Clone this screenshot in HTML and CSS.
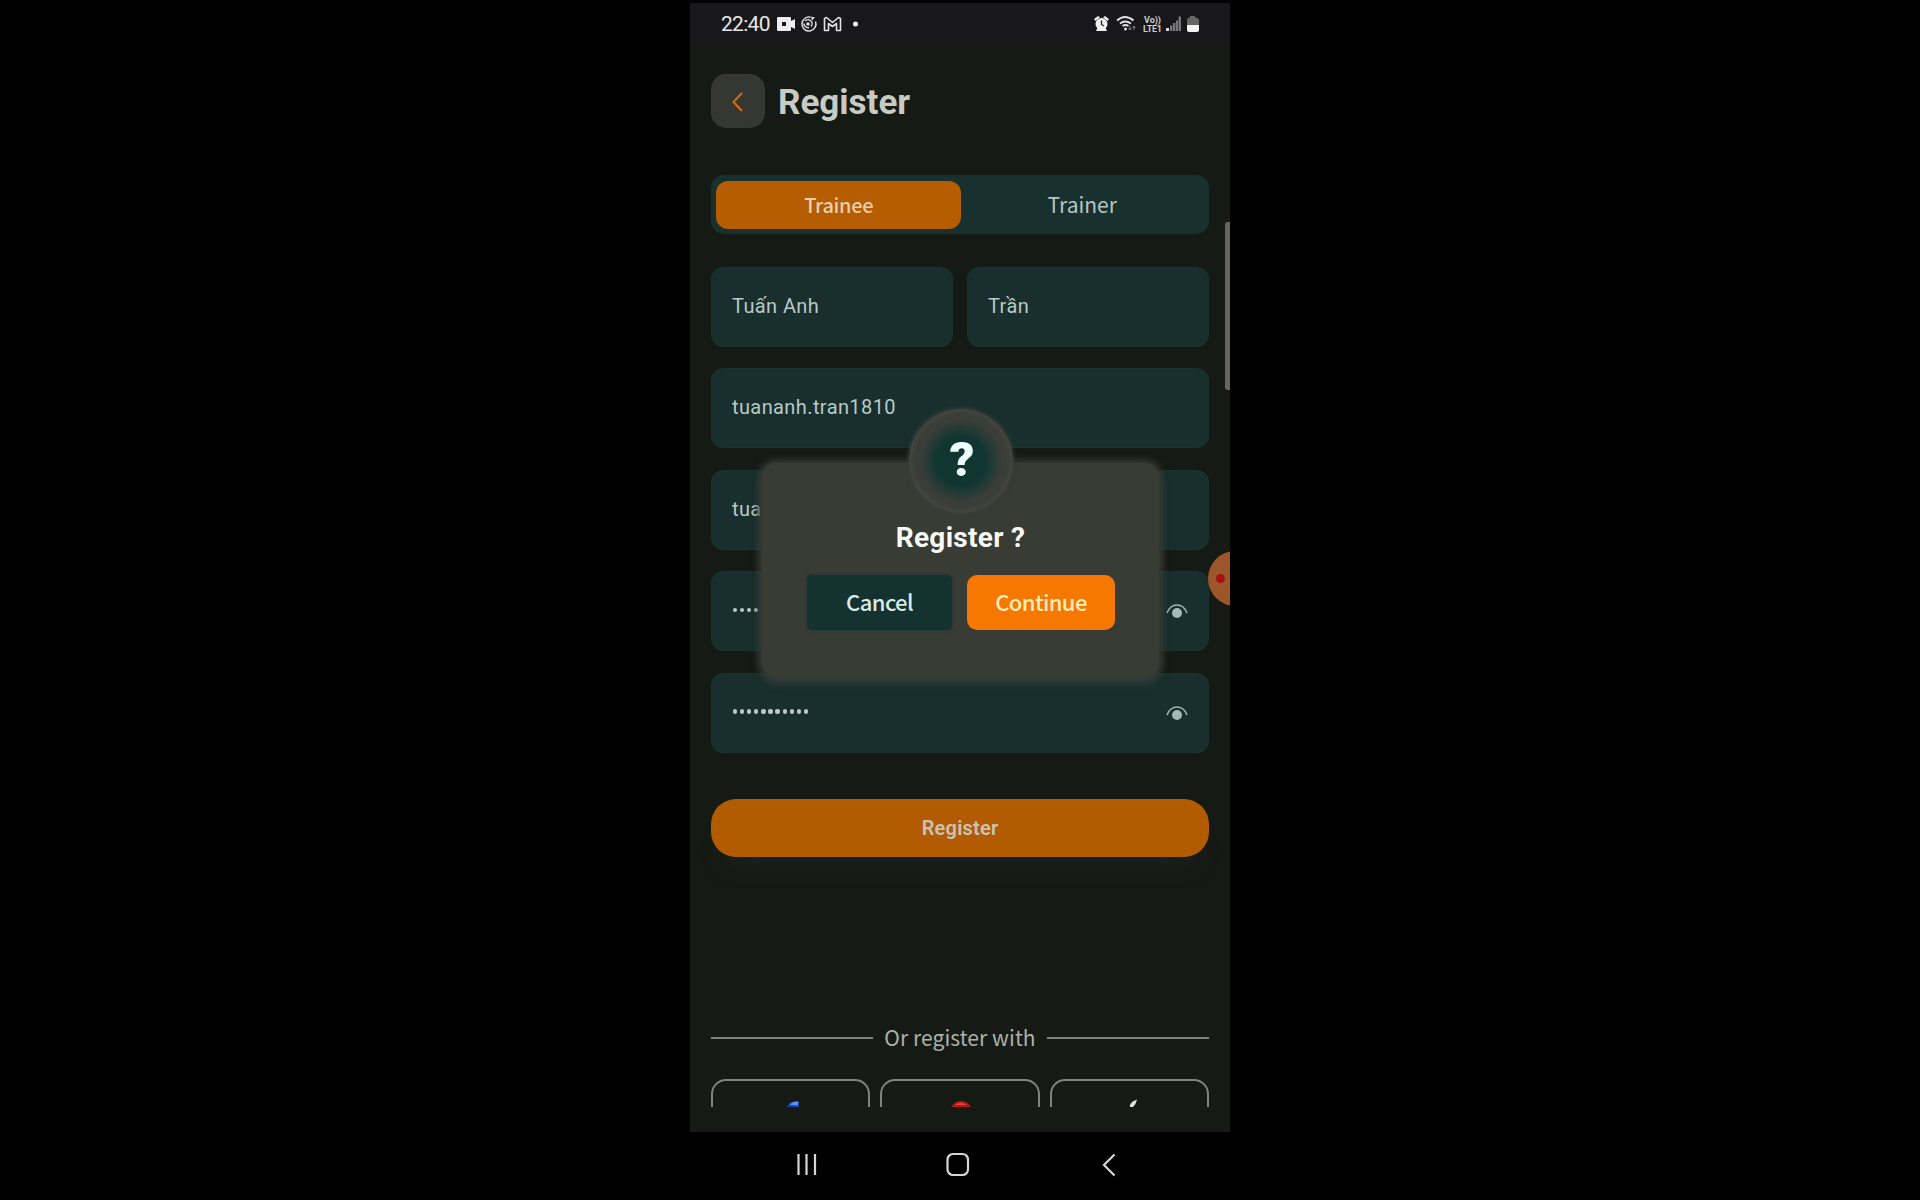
FILE: index.html
```
<!DOCTYPE html>
<html lang="en">
<head>
<meta charset="utf-8">
<title>Register</title>
<link rel="stylesheet" href="styles.css">
</head>
<body>
<div class="phone">
  <header class="status">
    <span class="clock">22:40</span>
    <svg class="status-left" width="90" height="20" viewBox="0 0 90 20">
      <path fill="#eee" fill-rule="evenodd" d="M3 3h12q1 0 1 1v3l4-2v10l-4-2v3q0 1-1 1H3q-1 0-1-1V4q0-1 1-1zM7 8v4h4V8z"/>
      <g fill="none" stroke="#ddd" stroke-width="1.5"><path d="M35.500 3.200A7 7 0 1 0 40.500 7.500"/><path d="M30 7a4 4 0 0 1 6 5.500M29 9.500a4 4 0 0 0 5 4"/></g>
      <circle cx="33" cy="10" r="1.800" fill="#ddd"/><path d="M36 2.500l4 1-3 3z" fill="#ddd"/>
      <path fill="none" stroke="#e2e2e2" stroke-width="1.600" stroke-linejoin="round" d="M49.500 16.500V4.500l2-1 6 5 6-5 2 1v12h-4v-7l-4 3-4-3v7z"/>
      <circle cx="80.500" cy="10" r="2.500" fill="#f2f2f2"/>
    </svg>
    <svg class="status-right" width="110" height="20" viewBox="0 0 110 20">
      <path fill="#eee" d="M1 5l4-3 2 1.200L2.500 7zM16 5l-4-3-2 1.200L14.500 7z"/><circle cx="8.500" cy="10" r="6" fill="#f0f0f0"/><path d="M3 17l2-4h7l2 4z" fill="#f0f0f0"/>
      <path d="M8.500 6.500v4l2.500 1.500" fill="none" stroke="#222" stroke-width="1.300"/>
      <g fill="none" stroke="#e2e2e2" stroke-width="2"><path d="M24 6.500q8-7 16.500 0"/><path d="M27 9.500q5-4 11 0"/><path d="M29.500 12q3-2 6 0"/></g>
      <circle cx="32.500" cy="15" r="1.500" fill="#ddd"/><path d="M37 12v4m-1.500-1.500L37 16l1.500-1.500M41 16v-4m-1.500 1.500L41 12l1.500 1.500" fill="none" stroke="#888" stroke-width="1"/>
      <text class="lte" x="51" y="8.500" textLength="17">Vo))</text><text class="lte" x="50" y="17.500" textLength="19">LTE1</text>
      <g fill="#777"><path fill="#ddd" d="M73 14h3v3h-3z"/><path d="M77 11.500h2.500V17H77zM80 9h2.500v8H80zM83 6.500h2V17h-2zM85.500 2.500H88V17h-2.500z"/></g>
      <path fill="#666" d="M94 11V6q0-2 3-2.500V2h5v1.500q4 .5 4 2.500v5z"/><path fill="#f4f4f4" d="M94 11h12v5q0 2-2 2h-8q-2 0-2-2z"/>
    </svg>
  </header>

  <main class="app">
    <div class="heading">
      <div class="back"><svg width="54" height="54" viewBox="0 0 54 54"><path d="M31 19l-8.500 9 8.500 9" fill="none" stroke="#dc6a0c" stroke-width="2"/></svg></div>
      <h1 class="title">Register</h1>
    </div>
    <div class="tabs"><div class="tab active">Trainee</div><div class="tab">Trainer</div></div>
    <form class="form">
      <div class="names"><div class="field">Tuấn Anh</div><div class="field">Trần</div></div>
      <div class="field user">tuananh.tran1810</div>
      <div class="field">tua</div>
      <div class="field"><span class="dots"><i></i><i></i><i></i><i></i></span>
        <svg class="eye" width="24" height="18" viewBox="0 0 24 18"><path d="M2 11q3-8 10-8t10 8" fill="none" stroke="#9db4b0" stroke-width="1.600"/><circle cx="12" cy="11" r="5" fill="#a3b9b5"/></svg></div>
      <div class="field"><span class="dots"><i></i><i></i><i></i><i></i><i></i><i></i><i></i><i></i><i></i><i></i><i></i></span>
        <svg class="eye" width="24" height="18" viewBox="0 0 24 18"><path d="M2 11q3-8 10-8t10 8" fill="none" stroke="#9db4b0" stroke-width="1.600"/><circle cx="12" cy="11" r="5" fill="#a3b9b5"/></svg></div>
    </form>
    <div class="submit">Register</div>
    <div class="divider"><span class="or">Or register with</span></div>
    <div class="socials">
      <div class="social"><svg width="30" height="8" viewBox="0 0 30 8"><path d="M11 8q1-6 12-6v6z" fill="#0e43b4"/><path d="M14 6q2-4 8-3.500V6.500z" fill="#638fe0"/></svg></div>
      <div class="social"><svg width="30" height="8" viewBox="0 0 30 8"><path d="M6 8q4-6 10-6t10 6z" fill="#b71916"/><path d="M10 6q6-4 12 0z" fill="#dc4b43"/></svg></div>
      <div class="social"><svg width="30" height="8" viewBox="0 0 30 8"><path d="M16 8q-1-5 7-7.500-1 5-4 7.500z" fill="#dce2dc"/></svg></div>
    </div>
  </main>

  <nav class="nav">
    <svg width="540" height="68" viewBox="0 0 540 68" fill="none" stroke="#d5d5d5" stroke-width="2.200">
      <path d="M108.500 22v21M116.500 22v21M125 22v21"/><rect x="257.500" y="22" width="20.500" height="21" rx="5.500"/><path d="M424.500 22.500L414 33l10.500 10.500"/>
    </svg>
  </nav>

  <div class="scrollbar"></div>
  <div class="bubble"><span class="bubble-dot"></span></div>
  <section class="dialog">
    <div class="badge">?</div>
    <h2 class="question">Register ?</h2>
    <div class="actions"><div class="btn cancel"><span class="label">Cancel</span></div><div class="btn continue"><span class="label">Continue</span></div></div>
  </section>
</div>
</body>
</html>
```
FILE: styles.css
```
* { box-sizing: border-box; }
body { margin: 0; background: #000; height: 1200px; overflow: hidden; display: flex; justify-content: center; }
svg { display: block; flex: none; }
.phone { position: relative; width: 540px; height: 1200px; padding-top: 3px; overflow: hidden; display: flex; flex-direction: column; font-family: Roboto, sans-serif; }
.status { height: 42px; flex: none; background: #18181a; display: flex; align-items: center; padding: 0 27px 0 31px; color: #e6e6e6; }
.clock { font-size: 21px; width: 54px; letter-spacing: -.7px; line-height: 24px; }
.status-left { margin-right: auto; }
.lte { font: bold 9px Roboto, sans-serif; fill: #ccc; }
.app { height: 1087px; flex: none; background: #161a14; padding: 29px 21px 0; }
.heading { display: flex; align-items: center; gap: 13px; height: 54px; }
.back { width: 54px; height: 54px; border-radius: 15px; background: #343732; }
.title { margin: 0; padding-top: 3px; font-size: 35px; font-weight: 700; line-height: 54px; color: #c6cbc4; }
.tabs { margin-top: 47px; height: 59px; padding: 6px 5px 5px; display: flex; border-radius: 13px; background: #18302e; }
.tab { flex: 1; display: flex; align-items: center; justify-content: center; padding-bottom: 2px; border-radius: 12px; color: #b5c5c1; font: 400 21px/30px "Noto Sans CJK SC", sans-serif; }
.active { background: #b55d00; color: #e8ceb0; font-weight: 500; font-size: 20px; letter-spacing: -.3px; padding-left: 1px; padding-bottom: 1px; }
.form { margin: 32.500px 0 0; display: flex; flex-direction: column; gap: 21.500px; }
.names { display: flex; gap: 14px; }
.names .field { flex: 1; }
.field { height: 80px; display: flex; align-items: center; justify-content: space-between; padding: 0 19px 2px 20px; border-radius: 12px; background: #182f2d; border: 1px solid #1a3330; color: #b9cac6; font-size: 20px; letter-spacing: .4px; }
.dots { display: flex; gap: 2.900px; padding-left: 1px; }
.dots i { width: 4.200px; height: 4.200px; border-radius: 50%; background: #b9cac6; }
.eye { margin-top: 2px; }
.submit { margin-top: 46px; height: 58px; border-radius: 25px; background: #b25b00; color: #c9c3b8; display: flex; align-items: center; justify-content: center; font-size: 20px; font-weight: 600; letter-spacing: .2px; box-shadow: 0 22px 20px -14px #1a211c; }
.divider { margin-top: 166.500px; height: 30px; display: flex; align-items: center; gap: 11px; color: #adb1ac; font: 400 21px/30px "Noto Sans CJK SC", sans-serif; letter-spacing: .08px; }
.or { padding-bottom: 3px; }
.divider::before, .divider::after { content: ""; flex: 1; height: 2px; background: #7f847d; }
.socials { margin-top: 26px; height: 28px; overflow: hidden; display: grid; grid-template-columns: repeat(3, 1fr); gap: 10px; }
.social { height: 58px; border: 2px solid #7f847d; border-radius: 15px; display: flex; justify-content: center; padding-top: 18px; }
.nav { height: 68px; flex: none; background: #000; }
.scrollbar { position: absolute; right: 0; top: 222px; width: 5px; height: 168px; border-radius: 3px 0 0 3px; background: #646760; }
.bubble { position: absolute; left: 518px; top: 551px; width: 55px; height: 55px; border-radius: 50%; background: #9d562a; padding: 23px 0 0 8px; }
.bubble-dot { display: block; width: 9px; height: 9px; border-radius: 50%; background: #a51010; }
.dialog { position: absolute; left: 72px; top: 463px; width: 397px; height: 213px; border-radius: 14px; background: #393b35; box-shadow: 0 0 7px 3px #393b35, 0 8px 10px 0 #34413dcc; display: flex; flex-direction: column; align-items: center; padding-top: 59px; }
.badge { position: absolute; left: 147px; top: -54px; width: 104px; height: 104px; border-radius: 50%; background: radial-gradient(circle closest-side, #113632 0 48%, #233a35 62%, #3b3d38 80%, #3b3d38 88%, #42443e 98%); box-shadow: 0 0 4px 1px #3b3e39; color: #effff9; display: flex; align-items: center; justify-content: center; font: 900 49px/56px Roboto, sans-serif; padding: 0 0 2px 2px; }
.question { margin: 0; color: #f7fbf7; font-size: 28px; line-height: 32px; font-weight: 700; letter-spacing: .3px; }
.actions { display: flex; gap: 15px; margin-top: 21px; padding-left: 1px; }
.btn { width: 148px; height: 55px; display: flex; align-items: center; justify-content: center; padding-bottom: 4px; border-radius: 10px; font: 500 22px/32px "Noto Sans CJK SC", sans-serif; letter-spacing: -.6px; }
.cancel { border-radius: 5px; background: #143330; color: #dceae5; box-shadow: 0 0 3px #143330; width: 145px; }
.continue { background: #f67800; color: #ffedb9; }
```
